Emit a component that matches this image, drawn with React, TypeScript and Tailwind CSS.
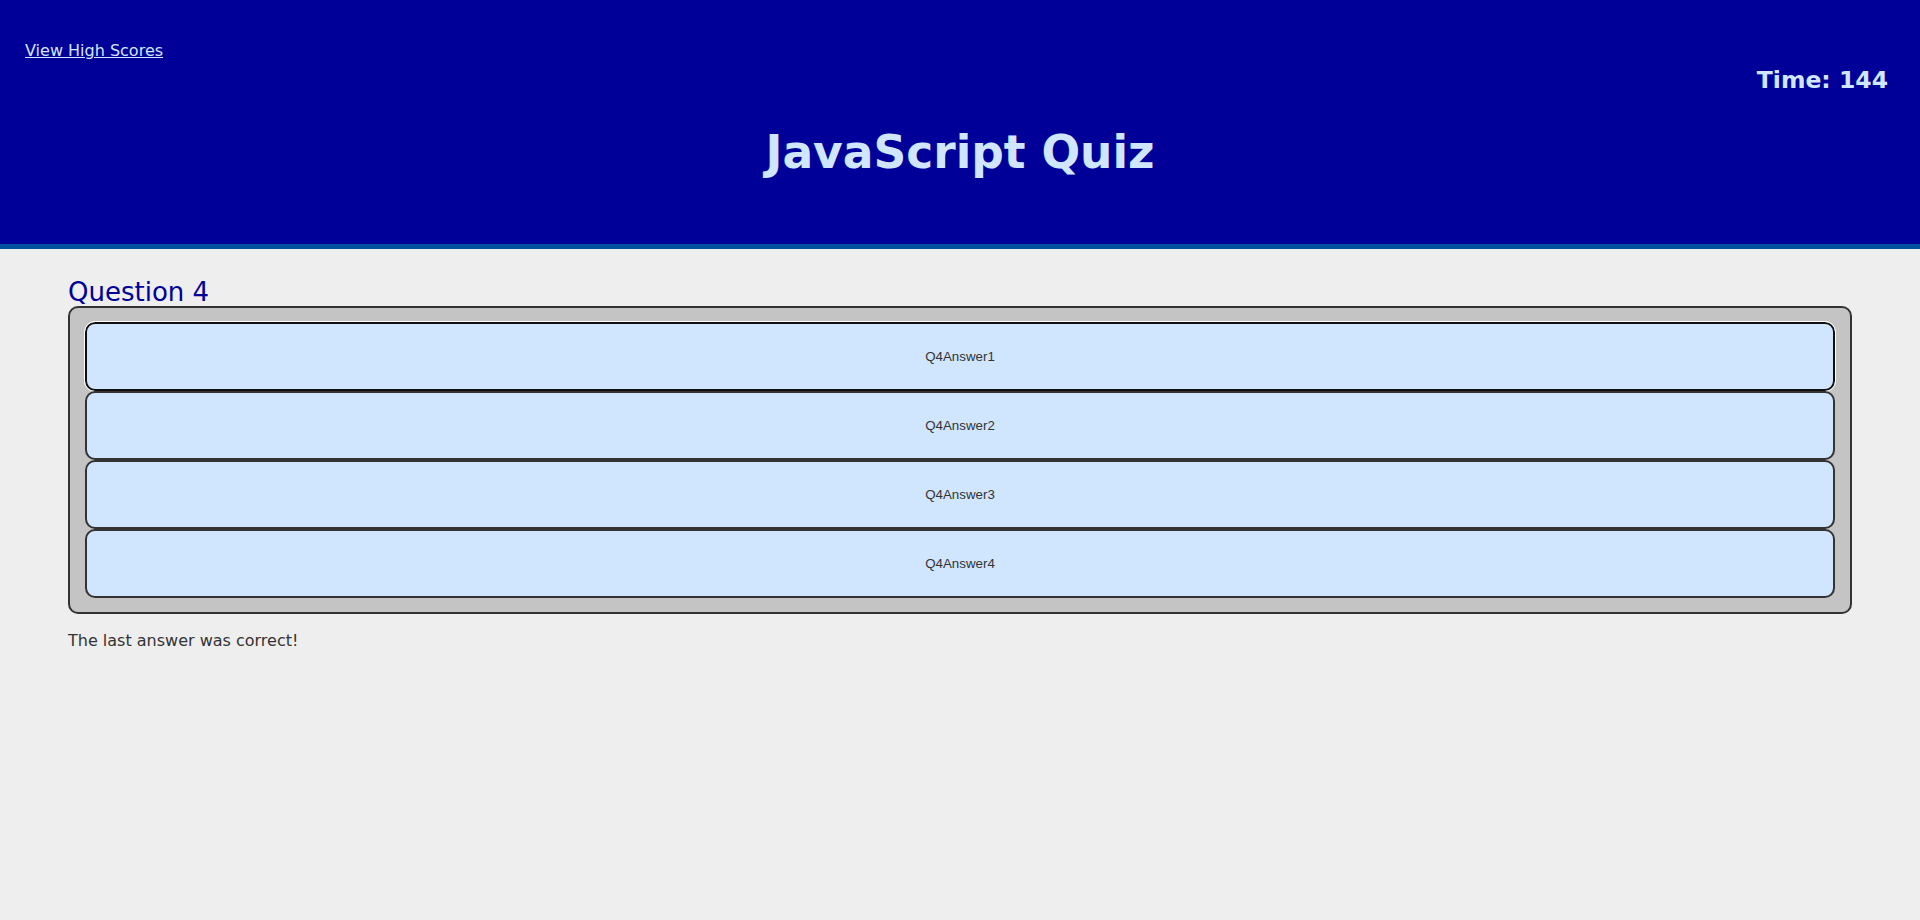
import React from "react";

const answers = ["Q4Answer1", "Q4Answer2", "Q4Answer3", "Q4Answer4"];

export default function App() {
  return (
    <div className="min-h-[920px] bg-[#eeeeee] font-['DejaVu_Sans',Verdana,sans-serif]">
      <header className="h-[249px] bg-[#000099] border-b-[5px] border-[#00509e] text-[#d0e6ff]">
        <div className="px-[25px] pt-[39px]">
          <a href="#" className="text-[16px] leading-[19px] underline text-[#d0e6ff]">
            View High Scores
          </a>
        </div>
        <div className="pr-[32px] mt-[3px] text-right text-[23.5px] leading-[28px] font-bold">
          Time: 144
        </div>
        <h1 className="mt-[32px] text-center text-[45.5px] leading-[54px] font-bold">JavaScript Quiz</h1>
      </header>
      <main className="px-[68px] pt-[28px]">
        <h2 className="text-[26px] leading-[31px] text-[#000099]">Question 4</h2>
        <div className="-mt-[2px] rounded-[10px] border-2 border-[#333333] bg-[#c4c4c4] px-[15px] py-[14px] flex flex-col">
          {answers.map((a, i) => (
            <button
              key={a}
              className={
                "h-[69px] w-full rounded-[10px] border-2 bg-[#d0e6ff] text-[13.33px] text-[#333333] font-['Liberation_Sans',Arial,sans-serif] " +
                (i === 0
                  ? "border-[#101010] outline outline-1 outline-white"
                  : "border-[#333333]")
              }
            >
              {a}
            </button>
          ))}
        </div>
        <p className="mt-[17px] text-[16px] leading-[19px] text-[#333333]">The last answer was correct!</p>
      </main>
    </div>
  );
}
